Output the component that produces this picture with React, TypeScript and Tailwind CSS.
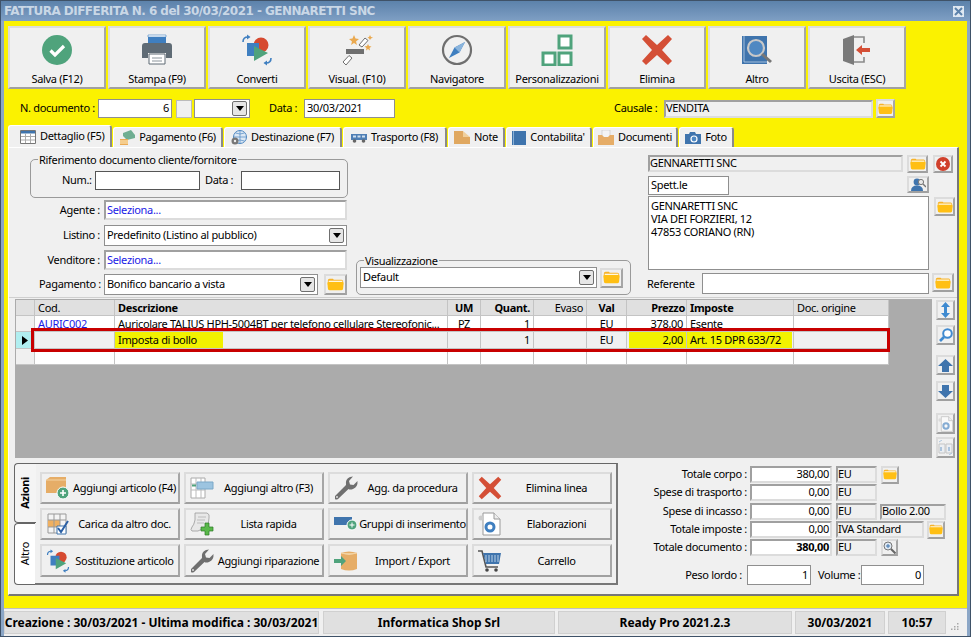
import type { ReactNode } from 'react';

const raised = 'border-2 border-t-[#dcdcdc] border-l-[#dcdcdc] border-r-[#a6a6a6] border-b-[#a0a0a0] bg-[#f0f0f0]';
const input = 'border border-[#8f8f8f] bg-white flex items-center px-[2px] text-[11px] text-black overflow-hidden whitespace-nowrap';
const sunken = 'border-2 border-t-[#a0a0a0] border-l-[#a0a0a0] border-r-[#dcdcdc] border-b-[#dcdcdc] bg-[#f0f0f0] flex items-center text-[11px] text-black overflow-hidden whitespace-nowrap';

function Folder({ s = 17 }: { s?: number }) {
  return (
    <svg width={s} height={s * 0.75} viewBox="0 0 20 15">
      <path d="M1 3Q1 1 3 1H7L8 2H17Q19 2 19 4V8H1Z" fill="#f7b32a" />
      <path d="M2 3.2H18V6H2Z" fill="#fff8e0" />
      <path d="M0.5 6Q0.5 4.8 2 4.8H18Q19.5 4.8 19.5 6L19 12Q19 14.5 17 14.5H3Q1 14.5 1 12Z" fill="#ffbf14" />
    </svg>
  );
}

function IconBtn({ className, children }: { className: string; children?: ReactNode }) {
  return <div className={`${raised} flex items-center justify-center shrink-0 ${className}`}>{children}</div>;
}

function Arrow() {
  return (
    <div className="w-[15px] h-[15px] shrink-0 rounded-[2px] border border-[#6f6f6f] bg-[#e6e6e6] flex items-center justify-center">
      <svg width="8" height="5" viewBox="0 0 8 5"><path d="M0 0H8L4 5Z" fill="#000" /></svg>
    </div>
  );
}

function Combo({ className, text }: { className: string; text?: string }) {
  return (
    <div className={`${input} justify-between pr-[2px] ${className}`}>
      <span>{text}</span>
      <Arrow />
    </div>
  );
}

function Saved() {
  return (
    <svg width="32" height="32" viewBox="0 0 32 32">
      <circle cx="16" cy="16" r="15" fill="#4fa37c" />
      <path d="M9.5 16.5 L14 21 L23 12" fill="none" stroke="#fff" strokeWidth="3.2" />
    </svg>
  );
}
function Printer() {
  return (
    <svg width="32" height="32" viewBox="0 0 32 32">
      <path d="M7 1H25V10H7Z" fill="#3f7fc0" />
      <path d="M7 1H25V3H7Z" fill="#fff" stroke="#3f7fc0" strokeWidth=".6" />
      <path d="M4 9H28Q31 9 31 12V24H25V19H7V24H1V12Q1 9 4 9Z" fill="#5f6b75" />
      <path d="M8 20H24V30H8Z" fill="#fff" stroke="#5f6b75" />
      <path d="M11 24H21M11 27H21" stroke="#8b949b" />
    </svg>
  );
}
function Convert({ s = 32 }: { s?: number }) {
  return (
    <svg width={s} height={s} viewBox="0 0 32 32">
      <circle cx="20" cy="11" r="7.5" fill="#d64a30" />
      <path d="M6 9H18V22H6Z" fill="#3f7fc0" />
      <path d="M13 12L27 19L13 27Z" fill="#4fa37c" />
      <path d="M2 8Q2 3 7 3" fill="none" stroke="#3f7fc0" strokeWidth="1.6" />
      <path d="M6 0.5L9.5 3L6 5.5Z" fill="#3f7fc0" />
      <path d="M30 24Q30 29 25 29" fill="none" stroke="#3f7fc0" strokeWidth="1.6" />
      <path d="M26 26.5L22.5 29L26 31.5Z" fill="#3f7fc0" />
    </svg>
  );
}
function Wand() {
  return (
    <svg width="32" height="32" viewBox="0 0 32 32">
      <path d="M5 15H23V20H5Z" fill="#6f6f6f" />
      <path d="M18 11L24 4L27 6.5L21 13Z M2 28L8 21.5L11 24L5 31Z" fill="#fff" stroke="#6f6f6f" />
      <path d="M13 1L14.5 4.5L18 5L15 7.5L16 11L13 9L10 11L11 7.5L8 5L11.5 4.5Z" fill="#eaa94f" />
      <path d="M27 10L28 12L30.5 12.5L28.5 14L29 16.5L27 15L25 16.5L25.5 14L23.5 12.5L26 12Z" fill="#eaa94f" />
      <path d="M29 1L30 3L32 3.5L30 4.5L29 6L28 4.5L26.5 3.5L28 3Z" fill="#eaa94f" />
    </svg>
  );
}
function Compass() {
  return (
    <svg width="32" height="32" viewBox="0 0 32 32">
      <circle cx="16" cy="16" r="14" fill="none" stroke="#6f6f6f" strokeWidth="2.2" />
      <path d="M24 8L18.5 18.5L8 24L13.5 13.5Z" fill="#3f7fc0" />
      <path d="M13.5 13.5L18.5 18.5L24 8Z" fill="#8ab4dc" />
    </svg>
  );
}
function Blocks() {
  return (
    <svg width="32" height="32" viewBox="0 0 32 32">
      <path d="M18 2H30V14H18Z M2 19H14V31H2Z M18 19H30V31H18Z" fill="#fff" stroke="#4fa37c" strokeWidth="3" />
    </svg>
  );
}
function Cross({ s = 32 }: { s?: number }) {
  return (
    <svg width={s} height={s} viewBox="0 0 32 32">
      <path d="M5 1L16 11L27 1L31 5L21 16L31 27L27 31L16 21L5 31L1 27L11 16L1 5Z" fill="#d44f36" />
    </svg>
  );
}
function Book() {
  return (
    <svg width="32" height="32" viewBox="0 0 32 32">
      <path d="M1 2H26V30H1Z" fill="#3f74ad" />
      <path d="M3 2V28H26" fill="none" stroke="#bcd2e8" strokeWidth=".8" />
      <circle cx="15" cy="14" r="8" fill="#4f88c2" stroke="#c8c8c8" strokeWidth="2.2" />
      <path d="M21 20L30 28" stroke="#777" strokeWidth="3" />
    </svg>
  );
}
function Door() {
  return (
    <svg width="32" height="32" viewBox="0 0 32 32">
      <path d="M2 5L13 1V31L2 27Z" fill="#7a7a7a" />
      <path d="M13 3H23V9M23 23V28H13" fill="none" stroke="#8a8a8a" strokeWidth="1.6" />
      <path d="M15 16L21 11V14H29V18H21V21Z" fill="#d44f36" />
    </svg>
  );
}

const toolbar: [string, ReactNode][] = [
  ['Salva (F12)', <Saved />],
  ['Stampa (F9)', <Printer />],
  ['Converti', <Convert />],
  ['Visual. (F10)', <Wand />],
  ['Navigatore', <Compass />],
  ['Personalizzazioni', <Blocks />],
  ['Elimina', <Cross />],
  ['Altro', <Book />],
  ['Uscita (ESC)', <Door />],
];

function TabTable() {
  return (
    <svg width="16" height="14" viewBox="0 0 16 14">
      <path d="M0.5 0.5H15.5V13.5H0.5Z" fill="#fff" stroke="#777" />
      <path d="M1 1H15V3.5H1Z" fill="#3f74ad" />
      <path d="M1 6.5H15M1 10H15M5.5 3.5V13M10.5 3.5V13" stroke="#aaa" />
    </svg>
  );
}
function TabMoney() {
  return (
    <svg width="16" height="16" viewBox="0 0 16 16">
      <path d="M4 3L12 0L16 5V8L8 10L4 6Z" fill="#6fae92" />
      <path d="M1 9H9V15H1Z" fill="#eaaa55" />
      <path d="M1 11H9M1 13H9" stroke="#fff0c8" />
    </svg>
  );
}
function TabGlobe() {
  return (
    <svg width="16" height="16" viewBox="0 0 16 16">
      <circle cx="9" cy="7" r="6.5" fill="#dce8f4" stroke="#4f88c2" />
      <path d="M2.5 7H15.5M9 .5V13.5M4.5 3Q9 5 13.5 3M4.5 11Q9 9 13.5 11" fill="none" stroke="#4f88c2" strokeWidth=".7" />
      <circle cx="4" cy="11" r="3.5" fill="#777" />
      <circle cx="4" cy="11" r="1.2" fill="#eee" />
    </svg>
  );
}
function TabTruck() {
  return (
    <svg width="16" height="10" viewBox="0 0 16 10">
      <path d="M0 1H16V7H0Z" fill="#4f7fb5" />
      <path d="M2 2.5H5V4.5H2ZM6.5 2.5H9.5V4.5H6.5ZM11 2.5H14V4.5H11Z" fill="#cfe0f0" />
      <circle cx="3.5" cy="8" r="1.8" fill="#666" />
      <circle cx="12.5" cy="8" r="1.8" fill="#666" />
    </svg>
  );
}
function TabBox() {
  return (
    <svg width="16" height="15" viewBox="0 0 16 15">
      <path d="M0 1H9V7H16V14H0Z" fill="#e0a860" />
      <path d="M9 1L16 7H9Z" fill="#f0cf9c" />
    </svg>
  );
}
function TabBook() {
  return (
    <svg width="14" height="16" viewBox="0 0 14 16">
      <path d="M0 1H14V15H0Z" fill="#3f74ad" />
      <path d="M1.5 1V15" stroke="#8ab0d6" />
    </svg>
  );
}
function TabFolder() {
  return (
    <svg width="16" height="15" viewBox="0 0 16 15">
      <path d="M4 0H12V8H4Z" fill="#f4f4f4" stroke="#bbb" strokeWidth=".5" />
      <path d="M0 5H4L6 7H10L12 5H16V15H0Z" fill="#e6ad67" />
    </svg>
  );
}
function TabCamera() {
  return (
    <svg width="16" height="12" viewBox="0 0 16 12">
      <path d="M0 2H4L5 0H10L11 2H16V12H0Z" fill="#3f74ad" />
      <circle cx="9" cy="7" r="3.6" fill="#fff" />
      <circle cx="9" cy="7" r="2.4" fill="#4f88c2" />
    </svg>
  );
}

const tabs: [string, string, ReactNode][] = [
  ['Dettaglio (F5)', 'w-[104px]', <TabTable />],
  ['Pagamento (F6)', 'w-[110px]', <TabMoney />],
  ['Destinazione (F7)', 'w-[118px]', <TabGlobe />],
  ['Trasporto (F8)', 'w-[104px]', <TabTruck />],
  ['Note', 'w-[57px]', <TabBox />],
  ['Contabilita\'', 'w-[86px]', <TabBook />],
  ['Documenti', 'w-[85px]', <TabFolder />],
  ['Foto', 'w-[55px]', <TabCamera />],
];

const cols = ['w-[19px]', 'w-[80px]', 'w-[333px]', 'w-[33px]', 'w-[53px]', 'w-[53px]', 'w-[40px]', 'w-[60px]', 'w-[107px]', 'w-[95px]'];
const cell = 'border-r border-b border-[#c4c4c4] h-full px-[3px] flex items-center overflow-hidden whitespace-nowrap text-[11px] text-black shrink-0';

function HeadRow() {
  const heads: [string, string][] = [
    ['', ''],
    ['Cod.', ''],
    ['Descrizione', 'font-bold'],
    ['UM', 'font-bold justify-center'],
    ['Quant.', 'font-bold justify-end'],
    ['Evaso', 'justify-end'],
    ['Val', 'font-bold justify-center'],
    ['Prezzo', 'font-bold justify-end !pr-[1px]'],
    ['Imposte', 'font-bold'],
    ['Doc. origine', ''],
  ];
  return (
    <div className="flex h-[16px] bg-[#e0e0e0] [&>div]:pt-[1px]">
      {heads.map((h, i) => (
        <div key={i} className={`${cell} ${cols[i]} ${h[1]}`}>{h[0]}</div>
      ))}
    </div>
  );
}

function DocGear({ s = 16 }: { s?: number }) {
  return (
    <svg width={s} height={s} viewBox="0 0 24 24">
      <path d="M5 1H16L22 7V23H5Z" fill="#fff" stroke="#999" />
      <path d="M16 1V7H22" fill="#eee" stroke="#999" />
      <circle cx="12" cy="15" r="4" fill="none" stroke="#3f7fc0" strokeWidth="3" />
      <circle cx="3" cy="6" r="2.5" fill="#ccc" />
    </svg>
  );
}

function ActionIcon({ name }: { name: string }) {
  if (name === 'box') return (
    <svg width="24" height="24" viewBox="0 0 24 24">
      <path d="M0 4L4 1H20V17H0Z" fill="#e6ad67" />
      <path d="M0 4H20" stroke="#f4d4a4" />
      <circle cx="17" cy="17" r="6" fill="#4fa37c" stroke="#fff" />
      <path d="M14 17H20M17 14V20" stroke="#fff" strokeWidth="1.6" />
    </svg>
  );
  if (name === 'tableArrow') return (
    <svg width="24" height="22" viewBox="0 0 24 22">
      <path d="M1 1H15V21H1Z" fill="#fff" stroke="#aaa" />
      <path d="M1 7H15M1 13H15M6 1V21M11 1V21" stroke="#bbb" />
      <path d="M7 5H23V12H7Z" fill="#9cc4e0" stroke="#7aa8c8" />
      <path d="M2 8.5H6" stroke="#4fa37c" strokeWidth="2" />
    </svg>
  );
  if (name === 'wrench') return (
    <svg width="24" height="24" viewBox="0 0 24 24">
      <path d="M1 20L12 9Q11 3 16 1L19 .5L15 5L16 8.5L19.5 9L23.5 5Q24 11 19 13Q16 14 14.5 13L4 23Q2 24 1 23Z" fill="#6f6f6f" />
      <circle cx="3" cy="21" r="1" fill="#ddd" />
    </svg>
  );
  if (name === 'cross') return <Cross s={24} />;
  if (name === 'tableCheck') return (
    <svg width="22" height="22" viewBox="0 0 22 22">
      <path d="M1 1H19V20H1Z" fill="#f4f4f4" stroke="#999" />
      <path d="M1 7H13V14H1Z" fill="#f0b060" />
      <path d="M1 7H19M1 14H19M7 1V20M13 1V20" stroke="#999" />
      <path d="M10 13H19V21H10Z" fill="#fff" stroke="#3f74ad" />
      <path d="M11 15L14 19L21 8" fill="none" stroke="#2a5fa5" strokeWidth="2" />
    </svg>
  );
  if (name === 'scroll') return (
    <svg width="24" height="24" viewBox="0 0 24 24">
      <path d="M5 1H17Q20 2 19 6L18 14L8 19H2Q0 18 2 15Q4 13 5 8Z" fill="#e8e8e8" stroke="#999" strokeWidth=".8" />
      <path d="M8 5H16M7 8H15M7 11H14" stroke="#aaa" strokeWidth=".7" />
      <path d="M15 11H19V15H23V19H19V23H15V19H11V15H15Z" fill="#59b84a" stroke="#2b7a26" strokeWidth=".7" />
    </svg>
  );
  if (name === 'bar') return (
    <svg width="24" height="18" viewBox="0 0 24 18">
      <path d="M0 2H18V10H0Z" fill="#3f74ad" />
      <circle cx="18" cy="10" r="5" fill="#4fa37c" stroke="#fff" />
      <path d="M15.5 10H20.5M18 7.5V12.5" stroke="#fff" />
    </svg>
  );
  if (name === 'docGear') return <DocGear s={24} />;
  if (name === 'convert') return <Convert s={24} />;
  if (name === 'db') return (
    <svg width="24" height="22" viewBox="0 0 24 22">
      <path d="M7 3Q15 0 23 3V19Q15 22 7 19Z" fill="#e6ad67" />
      <path d="M7 3Q15 6 23 3" fill="#f0cf9c" stroke="#f4d4a4" />
      <path d="M0 9H7V6L12 11L7 16V13H0Z" fill="#4fa37c" />
    </svg>
  );
  return (
    <svg width="24" height="22" viewBox="0 0 24 22">
      <path d="M0 1H4L8 17H20" fill="none" stroke="#555" strokeWidth="1.6" />
      <path d="M5 3H23L21 14H8Z" fill="#3f74ad" />
      <path d="M8 5V12M11 5V12M14 5V12M17 5V12M20 5V12" stroke="#bcd2e8" />
      <circle cx="9" cy="20" r="1.8" fill="#444" />
      <circle cx="18" cy="20" r="1.8" fill="#444" />
    </svg>
  );
}

const actions: [string, string][] = [
  ['Aggiungi articolo (F4)', 'box'],
  ['Aggiungi altro (F3)', 'tableArrow'],
  ['Agg. da procedura', 'wrench'],
  ['Elimina linea', 'cross'],
  ['Carica da altro doc.', 'tableCheck'],
  ['Lista rapida', 'scroll'],
  ['Gruppi di inserimento', 'bar'],
  ['Elaborazioni', 'docGear'],
  ['Sostituzione articolo', 'convert'],
  ['Aggiungi riparazione', 'wrench'],
  ['Import / Export', 'db'],
  ['Carrello', 'cart'],
];

function TotalRow({ label, value, bold, unit, children }: { label: string; value: string; bold?: boolean; unit: string; children?: ReactNode }) {
  return (
    <div className="flex items-center h-[17px] mb-[1px]">
      <div className="w-[108px] text-right text-[11px] text-black whitespace-nowrap">{label}</div>
      <div className={`ml-[3px] w-[82px] h-[17px] justify-end ${sunken} !bg-white pr-[1px] ${bold ? 'font-bold' : ''}`}>{value}</div>
      {unit === 'EU' && <div className={`ml-[4px] w-[41px] h-[17px] ${sunken}`}>EU</div>}
      {unit !== 'EU' && <div className={`ml-[4px] w-[88px] h-[17px] ${sunken}`}>{unit}</div>}
      {children}
    </div>
  );
}

export default function App() {
  return (
    <div className="w-[971px] h-[637px] overflow-hidden flex flex-col bg-[#8ba6c6] border border-[#3f5268] font-['Noto_Sans','DejaVu_Sans',sans-serif] text-[11px] tracking-[-0.32px] text-black">
      {/* title */}
      <div className="h-[20px] shrink-0 px-[3px] flex items-center justify-between bg-gradient-to-b from-[#5c82ab] to-[#7f9fc4]">
        <span className="font-bold text-[12px] text-[#c9d7e6] font-['DejaVu_Sans',sans-serif] tracking-[-0.55px]">FATTURA DIFFERITA N. 6 del 30/03/2021 - GENNARETTI SNC</span>
        <div className="w-[11px] h-[11px] mr-[3px] bg-[#dfe8f2] flex items-center justify-center">
          <svg width="9" height="9" viewBox="0 0 9 9"><path d="M1 1L8 8M8 1L1 8" stroke="#5c82ab" strokeWidth="2" /></svg>
        </div>
      </div>

      {/* yellow body */}
      <div className="mx-[3px] w-[963px] h-[587px] shrink-0 bg-[#fbf200] pl-[4px] pt-[5px]">
        <div className="flex gap-[2px] h-[63px]">
          {toolbar.map(([label, icon]) => (
            <div key={label} className={`${raised} w-[98px] flex flex-col items-center pt-[6px]`}>
              <div className="h-[34px] flex items-center justify-center">{icon}</div>
              <div className="mt-[4px] text-[11px] whitespace-nowrap">{label}</div>
            </div>
          ))}
        </div>

        <div className="flex items-center h-[19px] mt-[10px]">
          <span className="ml-[12px] w-[74px] whitespace-nowrap">N. documento :</span>
          <div className={`${input} ml-[4px] w-[74px] h-[19px] justify-end`}>6</div>
          <div className="ml-[4px] w-[16px] h-[18px] border border-[#bbb] bg-[#f0f0f0]" />
          <Combo className="ml-[2px] w-[56px] h-[19px]" />
          <span className="ml-[19px] w-[31px] whitespace-nowrap">Data :</span>
          <div className={`${input} ml-[4px] w-[91px] h-[19px]`}>30/03/2021</div>
          <span className="ml-[219px] w-[46px] whitespace-nowrap">Causale :</span>
          <div className={`${sunken} ml-[4px] w-[209px] h-[18px]`}>VENDITA</div>
          <IconBtn className="ml-[3px] w-[19px] h-[19px]"><Folder s={15} /></IconBtn>
        </div>

        {/* tabs */}
        <div className="flex items-end gap-[1px] h-[22px] mt-[7px]">
          {tabs.map(([label, w, icon], i) => (
            <div
              key={label}
              className={`${w} ${i === 0 ? 'h-[22px] pl-[11px]' : 'h-[20px] justify-center'} flex items-center gap-[4px] bg-[#f0f0f0] border-t border-l border-r-2 border-t-white border-l-white border-r-[#8a8a8a] rounded-t-[3px] whitespace-nowrap`}
            >
              {icon}
              <span>{label}</span>
            </div>
          ))}
        </div>

        {/* panel */}
        <div className="w-[951px] h-[449px] bg-[#f0f0f0] border-l border-t border-l-white border-t-white border-r-2 border-b-2 border-r-[#777] border-b-[#777]">
          <div className="flex h-[150px] border-b border-[#cfcfcf]">
            {/* left column */}
            <div className="ml-[21px] w-[317px] pt-[5px] shrink-0">
              <fieldset className="border border-[#9a9a9a] rounded-[5px] h-[45px] px-[7px]">
                <legend className="px-[1px] h-[13px] leading-[13px]">Riferimento documento cliente/fornitore</legend>
                <div className="flex items-center mt-[5px] h-[19px] -ml-[7px]">
                  <span className="ml-[31px] w-[30px]">Num.:</span>
                  <div className={`${input} ml-[3px] w-[105px] h-[19px] !border-[#555]`} />
                  <span className="ml-[5px] w-[31px]">Data :</span>
                  <div className={`${input} ml-[5px] w-[99px] h-[19px] !border-[#555]`} />
                </div>
              </fieldset>
              <div className="flex items-center h-[20px] mt-[2px]">
                <span className="w-[70px] text-right">Agente :</span>
                <div className={`${sunken} !bg-white ml-[4px] w-[243px] h-[20px] !text-[#1a1ae6] pl-[1px]`}>Seleziona...</div>
              </div>
              <div className="flex items-center h-[21px] mt-[5px]">
                <span className="w-[70px] text-right">Listino :</span>
                <Combo className="ml-[4px] w-[243px] h-[21px]" text="Predefinito (Listino al pubblico)" />
              </div>
              <div className="flex items-center h-[20px] mt-[4px]">
                <span className="w-[70px] text-right">Venditore :</span>
                <div className={`${sunken} !bg-white ml-[4px] w-[243px] h-[20px] !text-[#1a1ae6] pl-[1px]`}>Seleziona...</div>
              </div>
              <div className="flex items-center h-[21px] mt-[4px]">
                <span className="w-[71px] text-right">Pagamento :</span>
                <Combo className="ml-[3px] w-[214px] h-[21px]" text="Bonifico bancario a vista" />
                <IconBtn className="ml-[6px] w-[23px] h-[21px]"><Folder /></IconBtn>
              </div>
            </div>

            {/* visualizzazione */}
            <fieldset className="self-end mb-[2px] ml-[9px] w-[275px] h-[41px] shrink-0 border border-[#9a9a9a] rounded-[5px] pl-[3px]">
              <legend className="ml-[4px] px-[1px] h-[13px] leading-[13px]">Visualizzazione</legend>
              <div className="flex items-center">
                <Combo className="w-[237px] h-[21px]" text="Default" />
                <IconBtn className="ml-[3px] w-[23px] h-[20px]"><Folder /></IconBtn>
              </div>
            </fieldset>

            {/* cliente */}
            <div className="ml-[16px] w-[310px] pt-[7px] shrink-0">
              <div className="flex items-start h-[20px] ml-[1px]">
                <div className={`${sunken} w-[255px] h-[17px]`}>GENNARETTI SNC</div>
                <IconBtn className="ml-[4px] w-[21px] h-[18px]"><Folder s={16} /></IconBtn>
                <IconBtn className="ml-[5px] w-[20px] h-[18px]">
                  <svg width="14" height="14" viewBox="0 0 14 14">
                    <circle cx="7" cy="7" r="7" fill="#d0402c" />
                    <path d="M4.5 4.5L9.5 9.5M9.5 4.5L4.5 9.5" stroke="#fff" strokeWidth="1.8" />
                  </svg>
                </IconBtn>
              </div>
              <div className="flex items-start h-[20px] mt-[1px] ml-[1px]">
                <div className={`${input} w-[81px] h-[19px]`}>Spett.le</div>
                <IconBtn className="ml-[178px] w-[22px] h-[17px]">
                  <svg width="15" height="13" viewBox="0 0 15 13">
                    <circle cx="6" cy="4" r="3.4" fill="#3f74ad" />
                    <path d="M0 13Q0 7.5 6 7.5Q12 7.5 12 13Z" fill="#3f74ad" />
                    <circle cx="10" cy="4" r="2.6" fill="#e8e8e8" stroke="#777" />
                    <path d="M12 6L15 9" stroke="#777" strokeWidth="1.4" />
                  </svg>
                </IconBtn>
              </div>
              <div className="flex items-start ml-[1px]">
                <div className="w-[281px] h-[74px] border border-[#8f8f8f] bg-white px-[2px] pt-[2px] leading-[13px]">
                  GENNARETTI SNC<br />VIA DEI FORZIERI, 12<br />47853 CORIANO (RN)
                </div>
                <IconBtn className="ml-[5px] mt-[1px] w-[21px] h-[19px]"><Folder s={16} /></IconBtn>
              </div>
              <div className="flex items-start mt-[3px] h-[21px]">
                <span className="w-[49px] mt-[3px]">Referente</span>
                <div className={`${input} ml-[6px] w-[227px] h-[21px]`} />
                <IconBtn className="ml-[3px] w-[22px] h-[19px]"><Folder s={16} /></IconBtn>
              </div>
            </div>
          </div>

          {/* table */}
          <div className="flex ml-[6px] mt-[1px]">
            <div className="relative w-[917px] h-[159px] bg-[#ababab] pl-[1px] pt-[1px] shrink-0">
              <div className="w-[873px]">
                <HeadRow />
                <div className="flex h-[16px] bg-white [&>div]:pt-[1px]">
                  <div className={`${cell} ${cols[0]} bg-[#f0f0f0]`} />
                  <div className={`${cell} ${cols[1]} !text-[#1a1ae6]`}>AURIC002</div>
                  <div className={`${cell} ${cols[2]}`}>Auricolare TALIUS HPH-5004BT per telefono cellulare Stereofonic...</div>
                  <div className={`${cell} ${cols[3]} justify-center`}>PZ</div>
                  <div className={`${cell} ${cols[4]} justify-end`}>1</div>
                  <div className={`${cell} ${cols[5]}`} />
                  <div className={`${cell} ${cols[6]} justify-center`}>EU</div>
                  <div className={`${cell} ${cols[7]} justify-end`}>378,00</div>
                  <div className={`${cell} ${cols[8]}`}>Esente</div>
                  <div className={`${cell} ${cols[9]}`} />
                </div>
                <div className="flex h-[17px] bg-[#f0f0f0]">
                  <div className={`${cell} ${cols[0]} bg-[#b0eef0] !px-[6px]`}>
                    <svg width="6" height="9" viewBox="0 0 6 9"><path d="M0 0L6 4.5L0 9Z" fill="#000" /></svg>
                  </div>
                  <div className={`${cell} ${cols[1]}`} />
                  <div className={`${cell} ${cols[2]} !px-0`}>
                    <span className="w-[108px] h-full pl-[3px] flex items-center bg-[#f2f200]">Imposta di bollo</span>
                  </div>
                  <div className={`${cell} ${cols[3]}`} />
                  <div className={`${cell} ${cols[4]} justify-end`}>1</div>
                  <div className={`${cell} ${cols[5]}`} />
                  <div className={`${cell} ${cols[6]} justify-center`}>EU</div>
                  <div className={`${cell} ${cols[7]} !p-0`}>
                    <span className="ml-[2px] w-[58px] h-full pr-[3px] flex items-center justify-end bg-[#f2f200]">2,00</span>
                  </div>
                  <div className={`${cell} ${cols[8]} !p-0`}>
                    <span className="w-[105px] h-full pl-[3px] flex items-center bg-[#f2f200]">Art. 15 DPR 633/72</span>
                  </div>
                  <div className={`${cell} ${cols[9]}`} />
                </div>
                <div className="flex h-[16px] bg-white">
                  {cols.map((c, i) => (
                    <div key={i} className={`${cell} ${c} ${i === 0 ? 'bg-[#f0f0f0]' : ''}`} />
                  ))}
                </div>
              </div>
              <div className="absolute left-[16px] top-[29px] w-[859px] h-[24px] border-[3px] border-[#c80000]" />
            </div>
            <div className="ml-[4px] w-[19px] flex flex-col">
              <IconBtn className="w-[19px] h-[20px] mt-[1px]">
                <svg width="9" height="16" viewBox="0 0 9 16"><path d="M4.5 0L9 5H6V11H9L4.5 16L0 11H3V5H0Z" fill="#3f8ad0" /></svg>
              </IconBtn>
              <IconBtn className="w-[19px] h-[20px] mt-[5px]">
                <svg width="14" height="14" viewBox="0 0 14 14">
                  <circle cx="8.5" cy="5.5" r="4.3" fill="#fff" stroke="#3f8ad0" strokeWidth="2" />
                  <path d="M5 9L1 13" stroke="#3f8ad0" strokeWidth="2.6" />
                </svg>
              </IconBtn>
              <IconBtn className="w-[19px] h-[20px] mt-[10px]">
                <svg width="15" height="13" viewBox="0 0 15 13"><path d="M7.5 0L15 7H11V13H4V7H0Z" fill="#3f74ad" /></svg>
              </IconBtn>
              <IconBtn className="w-[19px] h-[20px] mt-[6px]">
                <svg width="15" height="13" viewBox="0 0 15 13"><path d="M4 0H11V6H15L7.5 13L0 6H4Z" fill="#3f74ad" /></svg>
              </IconBtn>
              <IconBtn className="w-[19px] h-[21px] mt-[12px]"><span className="flex opacity-60"><DocGear /></span></IconBtn>
              <IconBtn className="w-[19px] h-[21px] mt-[3px]">
                <svg className="opacity-60" width="15" height="15" viewBox="0 0 15 15">
                  <path d="M1 4H7V13H1ZM8 4H14V13H8Z" fill="#e8eef4" stroke="#aaa" />
                  <path d="M3 7V11M11 7V11" stroke="#7fa8d0" strokeWidth="2" />
                  <path d="M1 2L4 0M11 15L14 13" stroke="#7fa8d0" />
                </svg>
              </IconBtn>
            </div>
          </div>

          {/* bottom */}
          <div className="flex mt-[5px]">
            <div className="ml-[5px] w-[21px] h-[122px] flex flex-col shrink-0">
              <div className="h-[60px] border-t border-l border-b border-[#666] rounded-l-[4px] flex items-center justify-center z-10 -mr-[1px] bg-[#f4f4f4]">
                <span className="[writing-mode:vertical-rl] rotate-180 font-bold">Azioni</span>
              </div>
              <div className="h-[62px] border-l border-b border-t border-[#666] rounded-l-[4px] flex items-center justify-center bg-white">
                <span className="[writing-mode:vertical-rl] rotate-180">Altro</span>
              </div>
            </div>
            <div className="w-[583px] h-[122px] shrink-0 border-t border-t-[#666] border-r-2 border-b-2 border-r-[#777] border-b-[#777] px-[5px] pt-[8px] grid grid-cols-[140px_140px_140px_140px] grid-rows-[32px_32px_33px] gap-x-[4px] gap-y-[4px]">
              {actions.map(([label, icon]) => (
                <div key={label} className={`${raised} flex items-center`}>
                  <div className="w-[29px] pl-[2px] shrink-0 flex items-center justify-center"><ActionIcon name={icon} /></div>
                  <div className="flex-1 pt-[1px] text-center whitespace-nowrap">{label}</div>
                </div>
              ))}
            </div>

            <div className="ml-[21px] pt-[3px] w-[315px] shrink-0">
              <TotalRow label="Totale corpo :" value="380,00" unit="EU">
                <IconBtn className="ml-[4px] w-[18px] h-[18px]"><Folder s={14} /></IconBtn>
              </TotalRow>
              <TotalRow label="Spese di trasporto :" value="0,00" unit="EU" />
              <div className="h-[1px]" />
              <TotalRow label="Spese di incasso :" value="0,00" unit="EU">
                <div className={`${sunken} ml-[3px] w-[66px] h-[16px]`}>Bollo 2.00</div>
              </TotalRow>
              <TotalRow label="Totale imposte :" value="0,00" unit="IVA Standard">
                <IconBtn className="ml-[3px] w-[18px] h-[18px]"><Folder s={14} /></IconBtn>
              </TotalRow>
              <TotalRow label="Totale documento :" value="380,00" bold unit="EU">
                <IconBtn className="ml-[4px] w-[17px] h-[17px]">
                  <svg width="13" height="13" viewBox="0 0 13 13">
                    <circle cx="5" cy="5" r="4" fill="#dfe8f2" stroke="#777" />
                    <path d="M3 5H7M5 3V7" stroke="#3f74ad" />
                    <path d="M8 8L12.5 12.5" stroke="#666" strokeWidth="2" />
                  </svg>
                </IconBtn>
              </TotalRow>
              <div className="flex items-center h-[20px] mt-[9px]">
                <span className="w-[103px] text-right whitespace-nowrap">Peso lordo :</span>
                <div className={`${input} ml-[5px] w-[64px] h-[20px] justify-end`}>1</div>
                <span className="ml-[7px] w-[40px] whitespace-nowrap">Volume :</span>
                <div className={`${input} ml-[3px] w-[63px] h-[20px] justify-end`}>0</div>
              </div>
            </div>
          </div>
        </div>
      </div>

      {/* status bar */}
      <div className="flex-1 bg-[#f0f0f0] border-t border-[#c0c0c0] mx-[3px] flex items-center font-bold text-[12px] tracking-normal">
        <div className="w-[315px] h-[23px] bg-[#e0e0e0] border border-[#d0d0d0] flex items-center justify-center whitespace-nowrap">Creazione : 30/03/2021 - Ultima modifica : 30/03/2021</div>
        <div className="w-[232px] ml-[4px] h-[23px] bg-[#e0e0e0] border border-[#d0d0d0] flex items-center justify-center">Informatica Shop Srl</div>
        <div className="w-[234px] ml-[3px] h-[23px] bg-[#e0e0e0] border border-[#d0d0d0] flex items-center justify-center">Ready Pro 2021.2.3</div>
        <div className="w-[90px] ml-[3px] h-[23px] bg-[#e0e0e0] border border-[#d0d0d0] flex items-center justify-center">30/03/2021</div>
        <div className="w-[58px] ml-[3px] h-[23px] bg-[#e0e0e0] border border-[#d0d0d0] flex items-center justify-center">10:57</div>
        <svg className="ml-[5px] mt-[6px]" width="8" height="8" viewBox="0 0 8 8">
          <path d="M6 1H7.5V2.5H6ZM3 4H4.5V5.5H3ZM6 4H7.5V5.5H6ZM0 6.5H1.5V8H0ZM3 6.5H4.5V8H3ZM6 6.5H7.5V8H6Z" fill="#a8a8a8" />
        </svg>
      </div>
    </div>
  );
}
